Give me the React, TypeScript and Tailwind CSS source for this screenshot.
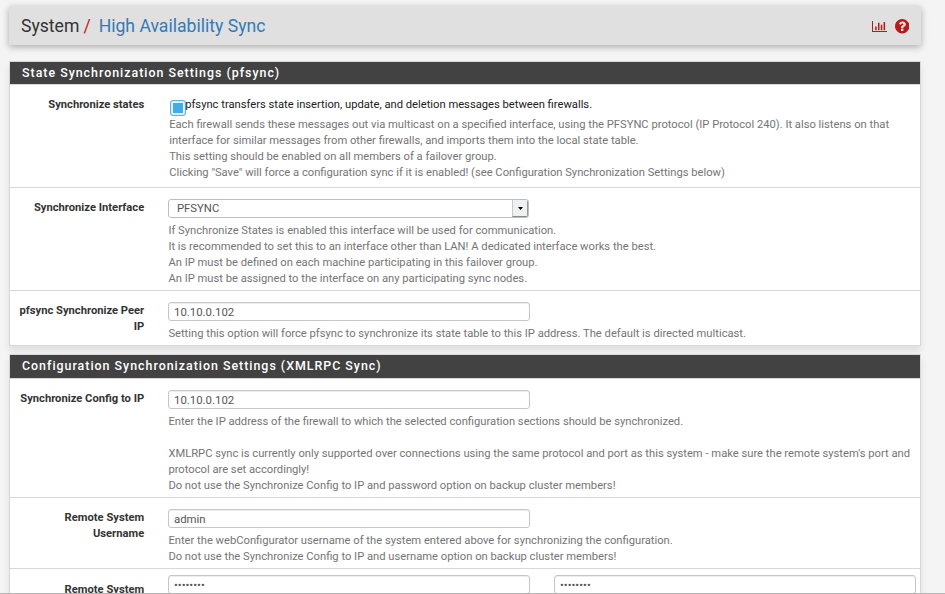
import React from 'react';

const inputBox =
  'block h-[19px] w-[362px] rounded-[3px] border border-[#c6c6c6] bg-white px-[5px] text-[11.4px] leading-[19px] text-[#555] shadow-[inset_0_1px_1px_rgba(0,0,0,0.075)] whitespace-nowrap';

function Panel({ title, headClass, className, children }: { title: string; headClass: string; className: string; children: React.ReactNode }) {
  return (
    <section className={`ml-[9px] w-[912px] border border-[#d8d8d8] bg-white shadow-[0_5px_7px_rgba(0,0,0,0.09)] ${className}`}>
      <h2 className={`border-b border-[#d8d8d8] bg-[#424242] pl-3 text-[12.4px] font-medium leading-[21px] text-white ${headClass}`}>{title}</h2>
      {children}
    </section>
  );
}

function Row({ label, className, children }: { label: string[]; className: string; children: React.ReactNode }) {
  return (
    <div className={`flex ${className}`}>
      <div className="w-[134.2px] shrink-0 whitespace-nowrap pt-[9px] text-right text-[11.2px] font-bold leading-4 text-[#333]">
        {label.map((l) => <div key={l}>{l}</div>)}
      </div>
      <div className="ml-[23.8px] min-w-0 flex-1">{children}</div>
    </div>
  );
}

function Help({ lines, className }: { lines: string[]; className: string }) {
  return (
    <div className={`whitespace-nowrap text-[11.2px] leading-4 text-[#757575] ${className}`}>
      {lines.map((l, i) => <div key={i} className="h-4">{l}</div>)}
    </div>
  );
}

export default function App() {
  return (
    <div className="flex h-[594px] w-[945px] flex-col overflow-hidden bg-[#f4f4f4] font-[Roboto,sans-serif]">
      <div className="min-h-0 flex-1 overflow-hidden">
        <header className="ml-[9px] mt-[6px] flex h-[39px] w-[912px] items-center rounded-[2px] bg-[#e0e0e0] pl-3 pr-[11.6px] shadow-[0_2px_7px_rgba(0,0,0,0.3)]">
          <h1 className="flex whitespace-nowrap pt-[2px] text-[17.6px] leading-[39px] text-[#333]">
            <span>System</span>
            <span className="ml-[4px] text-[#c41c1c]">/</span>
            <span className="ml-[8px] text-[#337ab7]">High Availability Sync</span>
          </h1>
          <div className="ml-auto flex items-center">
            <svg className="mr-2 mt-[2px] h-[11px] w-[15px]" viewBox="0 0 2048 1536" preserveAspectRatio="none" fill="#b71c1c">
              <path d="M640 768v512H430V768h210zM1024 256v1024H814V256h210zM2048 1400v136H0V0h136v1400h1912zM1408 512v768h-210V512h210zM1792 128v1152h-210V128h210z" />
            </svg>
            <svg className="mt-[2px] h-[14.4px] w-[14.4px]" viewBox="0 0 1536 1536">
              <path fill="#b71c1c" d="M896 1248v-192q0-14-9-23t-23-9H672q-14 0-23 9t-9 23v192q0 14 9 23t23 9h192q14 0 23-9t9-23zm256-672q0-88-55.500-163T958 297t-170-41q-243 0-371 213-15 24 8 42l132 100q7 6 19 6 16 0 25-12 53-68 86-92 34-24 86-24 48 0 85.500 26t37.500 59q0 38-20 61t-68 45q-63 28-115.500 86.500T640 892v36q0 14 9 23t23 9h192q14 0 23-9t9-23q0-19 21.500-49.500T972 829q32-18 49-28.500t46-35 44.500-48 28-60.500 12.500-81zm384 192q0 209-103 385.500T1153.500 1433 768 1536t-385.500-103T103 1153.500 0 768t103-385.500T382.500 103 768 0t385.500 103T1433 382.500 1536 768z" />
            </svg>
          </div>
        </header>

        <Panel title="State Synchronization Settings (pfsync)" headClass="h-[23px] tracking-[1px]" className="mt-4 h-[285px]">
          <Row label={['Synchronize states']} className="h-[103px] border-b border-[#d8d8d8] pt-[3px]">
            <div className="flex h-[19px] whitespace-nowrap pl-[2px] pt-[9px] text-[11.2px] leading-4 text-[#212121]">
              <span className="mt-[3px] block h-4 w-4 shrink-0 rounded-[3px] border border-[#5eb5e8] bg-[#3daee9] shadow-[inset_0_0_0_1px_#d4eaf6,inset_0_0_0_2px_#eff0f1]" />
              <span className="-ml-[0.8px]">pfsync transfers state insertion, update, and deletion messages between firewalls.</span>
            </div>
            <Help className="mt-[10px] pl-[1.2px]" lines={[
              'Each firewall sends these messages out via multicast on a specified interface, using the PFSYNC protocol (IP Protocol 240). It also listens on that',
              'interface for similar messages from other firewalls, and imports them into the local state table.',
              'This setting should be enabled on all members of a failover group.',
              'Clicking "Save" will force a configuration sync if it is enabled! (see Configuration Synchronization Settings below)',
            ]} />
          </Row>
          <Row label={['Synchronize Interface']} className="h-[103px] border-b border-[#d8d8d8] pt-[3px]">
            <div className="mt-[8px] flex h-[19px] w-[361.4px] overflow-hidden rounded-[3px] border border-[#bdbdbd] bg-white text-[11.3px] leading-[17px] text-[#555]">
              <span className="flex-1 pl-2">PFSYNC</span>
              <span className="flex w-4 items-center justify-center border-b border-l border-r border-b-[#888] border-l-[#c8c8c8] border-r-[#999] bg-[#eff0f1]">
                <svg className="h-[3px] w-[5px]" viewBox="0 0 5 3"><path d="M0 0h5L2.500 3z" fill="#000" /></svg>
              </span>
            </div>
            <Help className="mt-[5px] pl-[0.4px]" lines={[
              'If Synchronize States is enabled this interface will be used for communication.',
              'It is recommended to set this to an interface other than LAN! A dedicated interface works the best.',
              'An IP must be defined on each machine participating in this failover group.',
              'An IP must be assigned to the interface on any participating sync nodes.',
            ]} />
          </Row>
          <Row label={['pfsync Synchronize Peer', 'IP']} className="h-[54px] pt-[3px]">
            <div className={`mt-[8px] ${inputBox}`}>10.10.0.102</div>
            <Help className="mt-[5px] pl-[0.4px]" lines={['Setting this option will force pfsync to synchronize its state table to this IP address. The default is directed multicast.']} />
          </Row>
        </Panel>

        <Panel title="Configuration Synchronization Settings (XMLRPC Sync)" headClass="h-[24px] tracking-[1px]" className="mt-[8px] h-[300px]">
          <Row label={['Synchronize Config to IP']} className="h-[119px] border-b border-[#d8d8d8] pt-[3px]">
            <div className={`mt-[8px] ${inputBox}`}>10.10.0.102</div>
            <Help className="mt-[5px] pl-[0.4px]" lines={[
              'Enter the IP address of the firewall to which the selected configuration sections should be synchronized.',
              '',
              "XMLRPC sync is currently only supported over connections using the same protocol and port as this system - make sure the remote system's port and",
              'protocol are set accordingly!',
              'Do not use the Synchronize Config to IP and password option on backup cluster members!',
            ]} />
          </Row>
          <Row label={['Remote System', 'Username']} className="h-[71px] border-b border-[#d8d8d8] pt-[3px]">
            <div className={`mt-[8px] ${inputBox}`}>admin</div>
            <Help className="mt-[5px] pl-[0.4px]" lines={[
              'Enter the webConfigurator username of the system entered above for synchronizing the configuration.',
              'Do not use the Synchronize Config to IP and username option on backup cluster members!',
            ]} />
          </Row>
          <Row label={['Remote System']} className="h-[71px] pt-[4px]">
            <div className="mt-[2px] flex gap-6">
              <div className={inputBox}>••••••••</div>
              <div className={inputBox}>••••••••</div>
            </div>
          </Row>
        </Panel>
      </div>
      <div className="h-px shrink-0 bg-[#b5b5b5]" />
    </div>
  );
}
